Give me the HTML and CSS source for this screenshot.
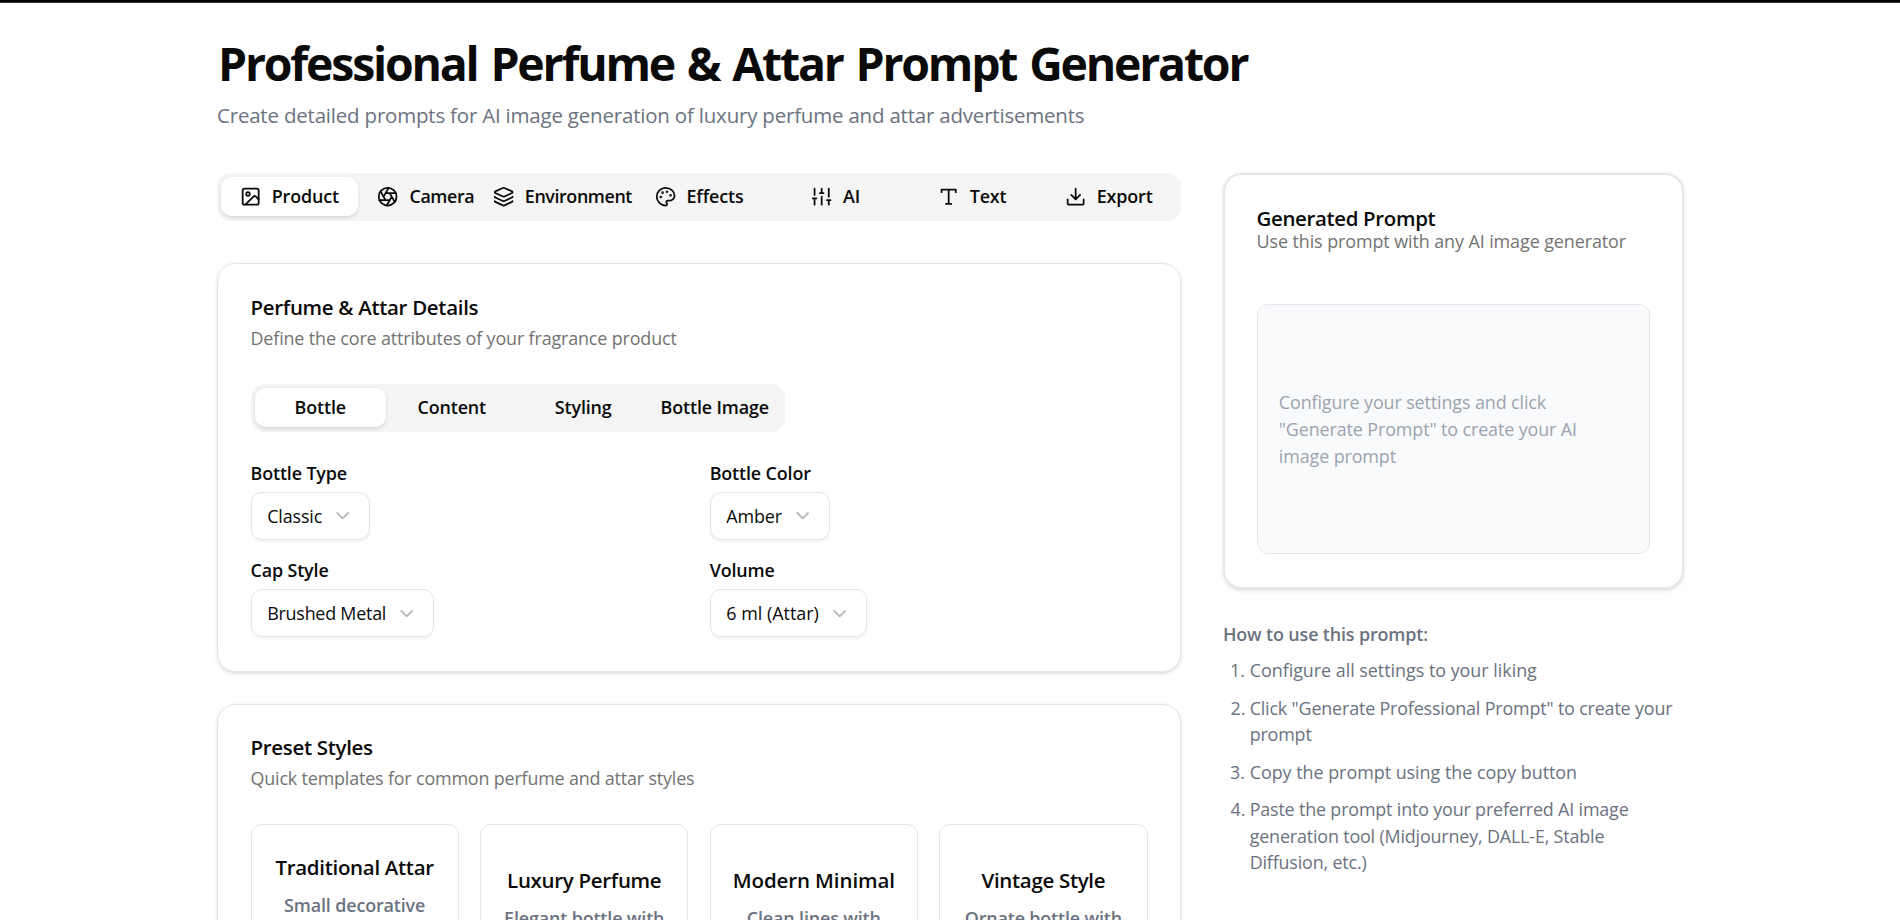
FILE: index.html
```
<!DOCTYPE html>
<html lang="en">
<head>
<meta charset="utf-8">
<title>Professional Perfume &amp; Attar Prompt Generator</title>
<link rel="stylesheet" href="styles.css">
</head>
<body>
<div class="topbar"></div>
<div class="page">
  <header>
    <h1 class="page-title">Professional Perfume &amp; Attar Prompt Generator</h1>
    <p class="page-subtitle">Create detailed prompts for AI image generation of luxury perfume and attar advertisements</p>
  </header>
  <div class="layout">
    <main class="main">
      <nav class="tabs tabs-main">
        <button class="tab active"><svg class="icon" viewBox="0 0 24 24"><rect width="18" height="18" x="3" y="3" rx="2"/><circle cx="9" cy="9" r="2"/><path d="m21 15-3.086-3.086a2 2 0 0 0-2.828 0L6 21"/></svg><span>Product</span></button>
        <button class="tab"><svg class="icon" viewBox="0 0 24 24"><circle cx="12" cy="12" r="10"/><path d="m14.31 8 5.74 9.94M9.69 8h11.48M7.38 12l5.74-9.94M9.69 16 3.95 6.06M14.31 16H2.83M16.62 12l-5.74 9.94"/></svg><span class="tight">Camera</span></button>
        <button class="tab"><svg class="icon" viewBox="0 0 24 24"><path d="M12.83 2.18a2 2 0 0 0-1.66 0L2.6 6.08a1 1 0 0 0 0 1.83l8.58 3.91a2 2 0 0 0 1.66 0l8.58-3.9a1 1 0 0 0 0-1.83z"/><path d="M2 12a1 1 0 0 0 .58.91l8.6 3.91a2 2 0 0 0 1.65 0l8.58-3.9A1 1 0 0 0 22 12"/><path d="M2 17a1 1 0 0 0 .58.91l8.6 3.91a2 2 0 0 0 1.65 0l8.58-3.9A1 1 0 0 0 22 17"/></svg><span class="tight">Environment</span></button>
        <button class="tab"><svg class="icon" viewBox="0 0 24 24"><circle class="dot" cx="13.5" cy="6.5" r=".5"/><circle class="dot" cx="17.5" cy="10.5" r=".5"/><circle class="dot" cx="8.5" cy="7.5" r=".5"/><circle class="dot" cx="6.5" cy="12.5" r=".5"/><path d="M12 2C6.5 2 2 6.5 2 12s4.5 10 10 10c.926 0 1.648-.746 1.648-1.688 0-.437-.18-.835-.437-1.125-.29-.289-.438-.652-.438-1.125a1.64 1.64 0 0 1 1.668-1.668h1.996c3.051 0 5.555-2.503 5.555-5.554C21.965 6.012 17.461 2 12 2z"/></svg><span>Effects</span></button>
        <button class="tab"><svg class="icon" viewBox="0 0 24 24"><path d="M4 21v-7M4 10V3M12 21v-9M12 8V3M20 21v-5M20 12V3M2 14h4M10 8h4M18 16h4"/></svg><span>AI</span></button>
        <button class="tab"><svg class="icon" viewBox="0 0 24 24"><path d="M4 7V4h16v3M9 20h6M12 4v16"/></svg><span>Text</span></button>
        <button class="tab"><svg class="icon" viewBox="0 0 24 24"><path d="M21 15v4a2 2 0 0 1-2 2H5a2 2 0 0 1-2-2v-4M7 10l5 5 5-5M12 15V3"/></svg><span>Export</span></button>
      </nav>

      <section class="card details">
        <h2 class="card-title">Perfume &amp; Attar Details</h2>
        <p class="card-desc">Define the core attributes of your fragrance product</p>
        <div class="tabs tabs-inner">
          <button class="tab active">Bottle</button>
          <button class="tab">Content</button>
          <button class="tab">Styling</button>
          <button class="tab">Bottle Image</button>
        </div>
        <div class="fields">
          <div class="field"><label class="label">Bottle Type</label><button class="select">Classic<svg class="chevron" viewBox="0 0 24 24"><path d="m6 9 6 6 6-6"/></svg></button></div>
          <div class="field"><label class="label">Bottle Color</label><button class="select">Amber<svg class="chevron" viewBox="0 0 24 24"><path d="m6 9 6 6 6-6"/></svg></button></div>
          <div class="field"><label class="label">Cap Style</label><button class="select select-long">Brushed Metal<svg class="chevron" viewBox="0 0 24 24"><path d="m6 9 6 6 6-6"/></svg></button></div>
          <div class="field"><label class="label">Volume</label><button class="select select-volume">6 ml (Attar)<svg class="chevron" viewBox="0 0 24 24"><path d="m6 9 6 6 6-6"/></svg></button></div>
        </div>
      </section>

      <section class="card presets-card">
        <h2 class="card-title">Preset Styles</h2>
        <p class="card-desc desc-presets">Quick templates for common perfume and attar styles</p>
        <div class="presets">
          <button class="preset preset-tall"><span class="preset-name">Traditional Attar</span><span class="preset-desc">Small decorative</span></button>
          <button class="preset"><span class="preset-name">Luxury Perfume</span><span class="preset-desc">Elegant bottle with</span></button>
          <button class="preset"><span class="preset-name wide">Modern Minimal</span><span class="preset-desc">Clean lines with</span></button>
          <button class="preset"><span class="preset-name">Vintage Style</span><span class="preset-desc">Ornate bottle with</span></button>
        </div>
      </section>
    </main>

    <aside class="side">
      <section class="prompt-card">
        <h2 class="card-title">Generated Prompt</h2>
        <p class="card-desc">Use this prompt with any AI image generator</p>
        <div class="prompt-box"><p>Configure your settings and click "Generate Prompt" to create your AI image prompt</p></div>
      </section>
      <div class="howto">
        <p class="howto-title">How to use this prompt:</p>
        <ol class="steps">
          <li class="loose">Configure all settings to your liking</li>
          <li>Click "Generate Professional Prompt" to create your prompt</li>
          <li class="loose">Copy the prompt using the copy button</li>
          <li>Paste the prompt into your preferred AI image generation tool (Midjourney, DALL-E, Stable Diffusion, etc.)</li>
        </ol>
      </div>
    </aside>
  </div>
</div>
</body>
</html>
```
FILE: styles.css
```
* { box-sizing: border-box; margin: 0; padding: 0; }

body {
  height: 920px;
  overflow: hidden;
  background: #fff;
  color: #0a0a0a;
  font: 400 17.92px/26.67px "Open Sans", "Noto Sans", sans-serif;
  letter-spacing: -0.14px;
}

button {
  border: 0;
  background: none;
  font: inherit;
  color: inherit;
  letter-spacing: inherit;
}

.topbar { height: 3px; background: #000; border-bottom: 1px solid #333; }

.page { width: 1466px; margin: 0 auto; padding-top: 36px; }

.page-title {
  padding-left: 1px;
  font-size: 46.4px;
  font-weight: 700;
  line-height: 48px;
  letter-spacing: -2.2px;
  word-spacing: 3px;
}
.page-subtitle {
  margin-top: 12px;
  color: #6b7280;
  font-size: 20.48px;
  line-height: 32px;
  letter-spacing: -0.19px;
}

.layout {
  display: grid;
  grid-template-columns: 964px 461px;
  column-gap: 42px;
  align-items: start;
  margin-top: 42px;
}

/* Tabs */
.tabs {
  display: grid;
  height: 48px;
  padding: 4px 4px 5px;
  border-radius: 13.33px;
  background: #f5f5f5;
}
.tabs-main { grid-template-columns: repeat(7, minmax(0, 1fr)); }
.tabs-inner {
  grid-template-columns: repeat(4, minmax(0, 1fr));
  width: 534px;
  margin-top: 32px;
}
.tab {
  display: flex;
  align-items: center;
  justify-content: center;
  gap: 10.67px;
  border-radius: 10.67px;
  font-weight: 600;
  white-space: nowrap;
}
.tab.active {
  background: #fff;
  box-shadow: 0 1.33px 4px rgba(0, 0, 0, .1), 0 1.33px 2.67px -1.33px rgba(0, 0, 0, .1);
}
.tight { letter-spacing: -0.42px; }
.icon {
  flex: none;
  width: 21.33px;
  height: 21.33px;
  fill: none;
  stroke: currentColor;
  stroke-width: 2;
  stroke-linecap: round;
  stroke-linejoin: round;
}
.dot { fill: currentColor; }

/* Cards */
.card {
  padding: 32px 32.5px;
  border: 1px solid #e5e5e5;
  border-radius: 18.67px;
  box-shadow: 0 1.33px 4px rgba(0, 0, 0, .1), 0 1.33px 2.67px -1.33px rgba(0, 0, 0, .1);
}
.details { height: 409px; margin-top: 42px; }
.card-title {
  font-size: 20.48px;
  font-weight: 600;
  line-height: 22px;
  letter-spacing: -0.3px;
}
.card-desc {
  margin-top: 6px;
  color: #737373;
  line-height: 28px;
}
.desc-presets { letter-spacing: -0.17px; }

/* Form fields */
.fields {
  display: grid;
  grid-template-columns: 1fr 1fr;
  gap: 21.33px;
  margin-top: 32px;
}
.field { display: flex; flex-direction: column; align-items: flex-start; gap: 10px; }
.label { font-weight: 600; line-height: 18px; }
.select {
  display: flex;
  align-items: center;
  gap: 10px;
  height: 48px;
  padding: 0 15.7px;
  border: 1px solid #e5e5e5;
  border-radius: 10.67px;
  box-shadow: 0 1.33px 2.67px rgba(0, 0, 0, .05);
  white-space: nowrap;
}
.select-long { letter-spacing: -0.24px; }
.select-volume { letter-spacing: 0; }
.chevron {
  width: 21.33px;
  height: 21.33px;
  fill: none;
  stroke: #b9b9b9;
  stroke-width: 2;
  stroke-linecap: round;
  stroke-linejoin: round;
}

/* Presets */
.presets-card { margin-top: 32px; padding-top: 31px; }
.presets {
  display: grid;
  grid-template-columns: repeat(4, minmax(0, 1fr));
  gap: 21.33px;
  margin-top: 32px;
}
.preset {
  display: flex;
  flex-direction: column;
  align-items: center;
  gap: 11px;
  height: 180px;
  padding-top: 41px;
  border: 1px solid #e5e5e5;
  border-radius: 10.67px;
  font-weight: 600;
  text-align: center;
}
.preset-tall { padding-top: 28px; }
.preset-name { font-size: 20.48px; line-height: 28px; letter-spacing: -0.3px; }
.preset-name.wide { letter-spacing: -0.1px; }
.preset-desc { color: #6b7280; }

/* Prompt panel */
.prompt-card {
  height: 416px;
  padding: 32px 32px 32px 31.5px;
  border: 2px solid #e5e7eb;
  border-radius: 18.67px;
  box-shadow: 0 1.33px 4px rgba(0, 0, 0, .1), 0 1.33px 2.67px -1.33px rgba(0, 0, 0, .1);
}
.prompt-card .card-title { letter-spacing: -0.35px; }
.prompt-card .card-desc {
  margin-top: 3px;
  line-height: 18.67px;
  letter-spacing: -0.08px;
}
.prompt-box {
  display: flex;
  align-items: center;
  height: 250px;
  margin-top: 53.5px;
  padding: 0 21.33px;
  border: 1px solid #e5e7eb;
  border-radius: 10.67px;
  background: #f9fafb;
  color: #9ca3af;
  letter-spacing: -0.11px;
}

.howto { margin-top: 31.5px; color: #6b7280; }
.howto-title { font-weight: 600; }
.steps { margin-top: 10px; padding-left: 26.67px; }
.steps li { margin-bottom: 10.67px; letter-spacing: -0.17px; }
.steps .loose { letter-spacing: -0.02px; }
```
